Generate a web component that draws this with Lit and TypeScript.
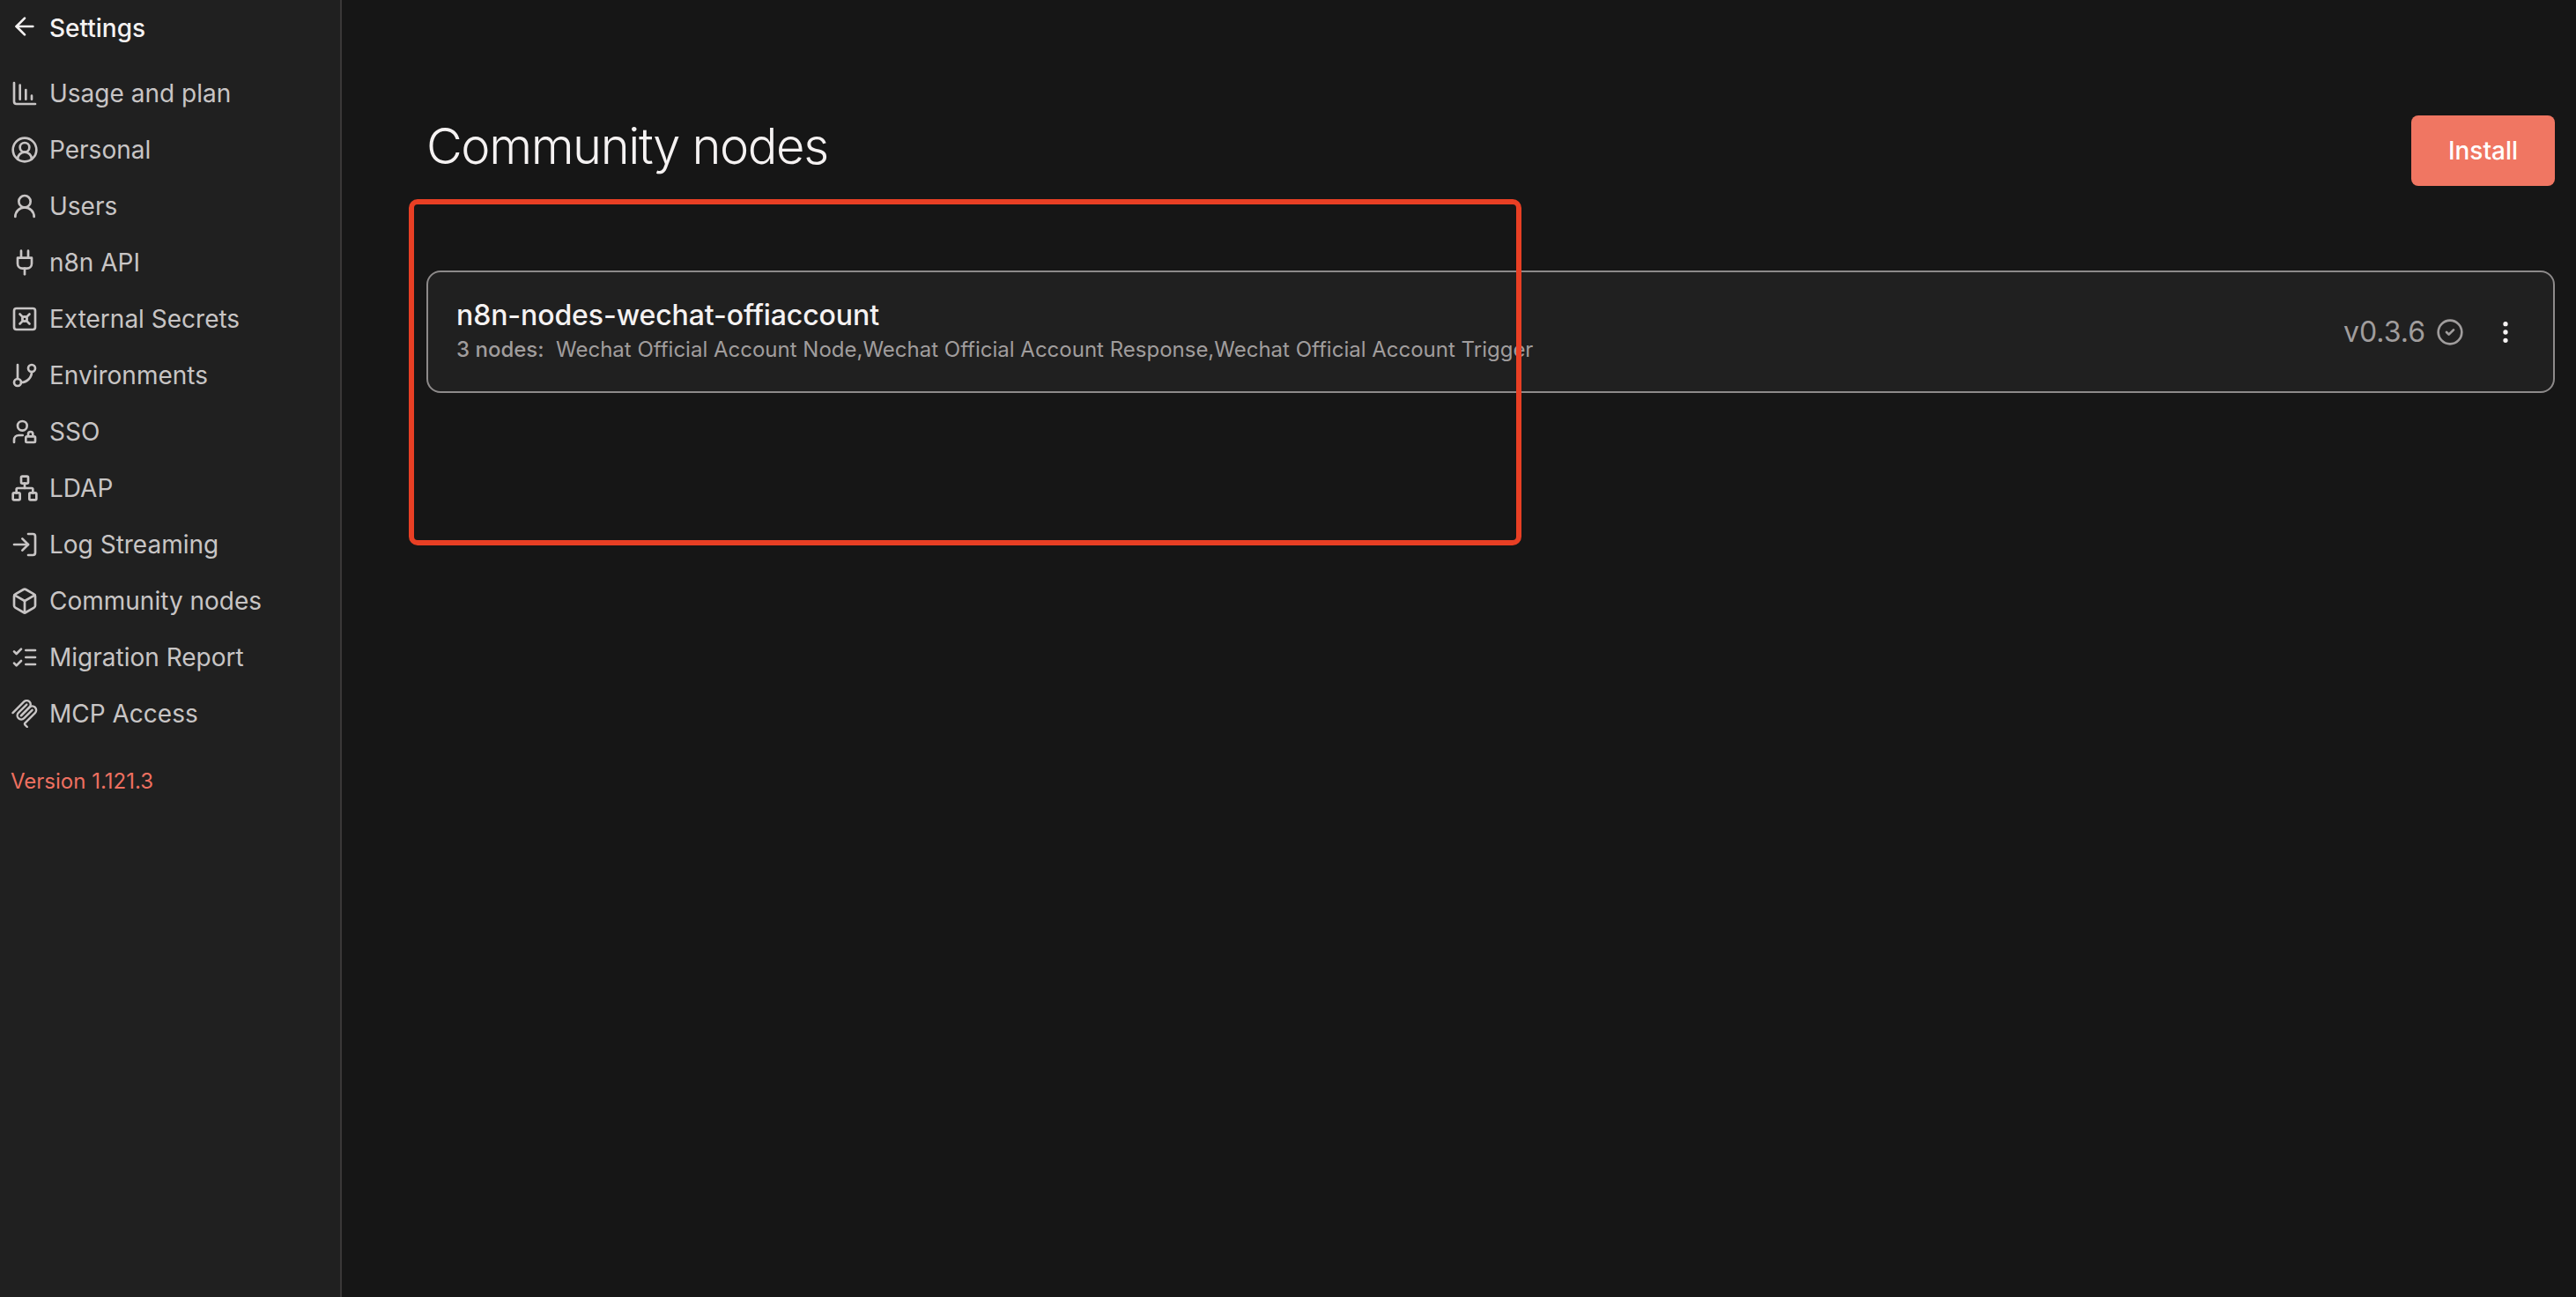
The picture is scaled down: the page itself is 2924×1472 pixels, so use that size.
import { LitElement, html, css, svg } from "lit";
import { customElement } from "lit/decorators.js";

const icons: Record<string, unknown> = {
  back: svg`<path d="m12 19-7-7 7-7"/><path d="M19 12H5"/>`,
  usage: svg`<path d="M13 17V9"/><path d="M18 17v-3"/><path d="M3 3v16a2 2 0 0 0 2 2h16"/><path d="M8 17V5"/>`,
  personal: svg`<path d="M18 20a6 6 0 0 0-12 0"/><circle cx="12" cy="10" r="4"/><circle cx="12" cy="12" r="10"/>`,
  users: svg`<circle cx="12" cy="8" r="5"/><path d="M20 21a8 8 0 0 0-16 0"/>`,
  plug: svg`<path d="M12 22v-5"/><path d="M9 8V2"/><path d="M15 8V2"/><path d="M18 8v5a4 4 0 0 1-4 4h-4a4 4 0 0 1-4-4V8Z"/>`,
  vault: svg`<rect width="18" height="18" x="3" y="3" rx="2"/><path d="m7.9 7.9 2.7 2.7"/><path d="m13.4 10.6 2.7-2.7"/><path d="m7.9 16.1 2.7-2.7"/><path d="m13.4 13.4 2.7 2.7"/><circle cx="12" cy="12" r="2"/>`,
  branch: svg`<line x1="6" x2="6" y1="3" y2="15"/><circle cx="18" cy="6" r="3"/><circle cx="6" cy="18" r="3"/><path d="M18 9a9 9 0 0 1-9 9"/>`,
  sso: svg`<circle cx="10" cy="7" r="4"/><path d="M10.3 15H7a4 4 0 0 0-4 4v2"/><path d="M15 15.5V14a2 2 0 0 1 4 0v1.5"/><rect width="8" height="5" x="13" y="16" rx=".899"/>`,
  network: svg`<rect x="16" y="16" width="6" height="6" rx="1"/><rect x="2" y="16" width="6" height="6" rx="1"/><rect x="9" y="2" width="6" height="6" rx="1"/><path d="M5 16v-3a1 1 0 0 1 1-1h12a1 1 0 0 1 1 1v3"/><path d="M12 12V8"/>`,
  login: svg`<path d="m10 17 5-5-5-5"/><path d="M15 12H3"/><path d="M15 3h4a2 2 0 0 1 2 2v14a2 2 0 0 1-2 2h-4"/>`,
  box: svg`<path d="M21 8a2 2 0 0 0-1-1.73l-7-4a2 2 0 0 0-2 0l-7 4A2 2 0 0 0 3 8v8a2 2 0 0 0 1 1.73l7 4a2 2 0 0 0 2 0l7-4A2 2 0 0 0 21 16Z"/><path d="m3.3 7 8.7 5 8.7-5"/><path d="M12 22V12"/>`,
  checks: svg`<path d="m3 17 2 2 4-4"/><path d="m3 7 2 2 4-4"/><path d="M13 6h8"/><path d="M13 12h8"/><path d="M13 18h8"/>`,
  check: svg`<circle cx="12" cy="12" r="10"/><path d="m9 12 2 2 4-4"/>`,
  kebab: svg`<circle cx="12" cy="12" r="1"/><circle cx="12" cy="5" r="1"/><circle cx="12" cy="19" r="1"/>`,
};

const mcp = html`<svg class="icon" viewBox="11.5 17 172 172" fill="none" stroke="currentColor" stroke-width="13" stroke-linecap="round">
  <path d="M25 97.8528L92.8822 29.9706C102.255 20.598 117.451 20.598 126.823 29.9706C136.196 39.3431 136.196 54.5391 126.823 63.9117L75.5581 115.177"/>
  <path d="M76.2652 114.47L126.823 63.9117C136.196 54.5391 151.392 54.5391 160.765 63.9117L161.118 64.2652C170.491 73.6378 170.491 88.8338 161.118 98.2063L99.7248 159.6C96.6006 162.724 96.6006 167.789 99.7248 170.913L112.331 183.52"/>
  <path d="M109.853 46.9411L59.6482 97.1457C50.2757 106.518 50.2757 121.714 59.6482 131.087C69.0208 140.459 84.2168 140.459 93.5894 131.087L143.794 80.8822"/>
</svg>`;

const icon = (name: string) => html`<svg class="icon" viewBox="0 0 24 24" fill="none" stroke="currentColor" stroke-width="2" stroke-linecap="round" stroke-linejoin="round">${icons[name]}</svg>`;

const items: [string, string][] = [
  ["usage", "Usage and plan"],
  ["personal", "Personal"],
  ["users", "Users"],
  ["plug", "n8n API"],
  ["vault", "External Secrets"],
  ["branch", "Environments"],
  ["sso", "SSO"],
  ["network", "LDAP"],
  ["login", "Log Streaming"],
  ["box", "Community nodes"],
  ["checks", "Migration Report"],
  ["mcp", "MCP Access"],
];

@customElement("app-root")
export class AppRoot extends LitElement {
  static styles = css`
    :host {
      display: flex;
      width: 2924px;
      height: 1472px;
      position: relative;
      overflow: hidden;
      background: #161616;
      font-family: Inter, "Liberation Sans", sans-serif;
      color: #c8c5c5;
    }
    .icon { width: 32px; height: 32px; flex: none; display: block; }
    .sidebar {
      width: 388px;
      flex: none;
      box-sizing: border-box;
      background: #202020;
      border-right: 2px solid #3a3838;
      display: flex;
      flex-direction: column;
      padding: 8px 12px 0;
    }
    .head {
      display: flex;
      align-items: center;
      gap: 12px;
      height: 48px;
      font-size: 28px;
      font-weight: 500;
      color: #f5f2f2;
    }
    .head .icon { margin-top: -4px; }
    .nav { display: flex; flex-direction: column; margin-top: 18px; }
    .row {
      display: flex;
      align-items: center;
      gap: 12px;
      height: 64px;
      font-size: 28px;
      font-weight: 400;
    }
    .version { margin: 29px 0 0 0; font-size: 24px; line-height: 32px; color: #ee7060; }
    .main {
      flex: 1;
      min-width: 0;
      padding: 131px 24px 0 96px;
      display: flex;
      flex-direction: column;
    }
    .top {
      display: flex;
      justify-content: space-between;
      align-items: flex-start;
      height: 176px;
    }
    h1 {
      margin: 0;
      font-size: 56px;
      line-height: 70px;
      font-weight: 300;
      letter-spacing: -1.4px;
      color: #f5f2f2;
    }
    .install {
      width: 163px;
      height: 80px;
      border: 0;
      border-radius: 8px;
      background: #f07662;
      color: #fff;
      font: 500 28px Inter, "Liberation Sans", sans-serif;
      padding: 0;
    }
    .card {
      height: 139px;
      box-sizing: border-box;
      border: 2px solid #8d8a8a;
      border-radius: 16px;
      background: #202020;
      display: flex;
      align-items: center;
      justify-content: space-between;
      padding: 0 38px 0 32px;
    }
    .info { display: flex; flex-direction: column; gap: 5px; margin-bottom: 2px; }
    .name { font-size: 32px; line-height: 38px; font-weight: 500; letter-spacing: -0.1px; color: #f5f2f2; }
    .desc { font-size: 24px; line-height: 30px; color: #a09d9d; white-space: pre; }
    .desc b { font-weight: 500; }
    .meta { display: flex; align-items: center; font-size: 32px; color: #a09d9d; gap: 12px; }
    .kebab { color: #f5f2f2; margin-left: 19px; }
    .mark {
      position: absolute;
      left: 464px;
      top: 226px;
      width: 1263px;
      height: 393px;
      box-sizing: border-box;
      border: 6px solid #e83f24;
      border-radius: 10px;
      pointer-events: none;
    }
  `;

  render() {
    return html`
      <aside class="sidebar">
        <div class="head">${icon("back")}<span>Settings</span></div>
        <nav class="nav">
          ${items.map(([i, t]) => html`<div class="row">${i === "mcp" ? mcp : icon(i)}<span>${t}</span></div>`)}
        </nav>
        <div class="version">Version 1.121.3</div>
      </aside>
      <main class="main">
        <div class="top">
          <h1>Community nodes</h1>
          <button class="install">Install</button>
        </div>
        <div class="card">
          <div class="info">
            <div class="name">n8n-nodes-wechat-offiaccount</div>
            <div class="desc"><b>3 nodes:</b>  Wechat Official Account Node,Wechat Official Account Response,Wechat Official Account Trigger</div>
          </div>
          <div class="meta">
            <span>v0.3.6</span>
            ${icon("check")}
            <span class="kebab">${icon("kebab")}</span>
          </div>
        </div>
      </main>
      <div class="mark"></div>
    `;
  }
}
